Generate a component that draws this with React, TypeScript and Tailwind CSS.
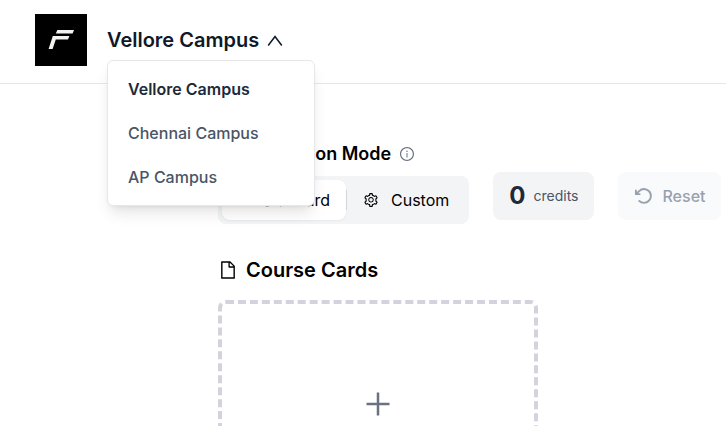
import { AiOutlineInfoCircle, AiOutlineSetting, AiOutlineFile } from "react-icons/ai";
import { PiArrowCounterClockwiseBold } from "react-icons/pi";

const campuses = ["Vellore Campus", "Chennai Campus", "AP Campus"];

function Logo() {
  return (
    <a href="#" aria-label="Home" className="block size-13 shrink-0 bg-black">
      <svg viewBox="0 0 52 52" className="size-full" fill="#f3f4f1">
        <path d="M22.4 16H39L37.6 19.6H20.8Z" />
        <path d="M17.8 22H34.4L33 25.4H20.8L17.6 35H13.6Z" />
      </svg>
    </a>
  );
}

function CampusPicker() {
  return (
    <div className="relative">
      <button type="button" aria-expanded="true" className="flex items-center gap-2 text-xl leading-7 font-semibold text-gray-900">
        Vellore Campus
        <svg viewBox="0 0 16 16" className="size-4" fill="none" stroke="currentColor" strokeWidth="1.5">
          <path d="M1.2 13.5L8 4.5L14.8 13.5" />
        </svg>
      </button>
      <ul className="absolute top-full left-0 z-10 mt-1.5 w-52 rounded-md border border-gray-200 bg-white py-1.5 shadow-lg">
        {campuses.map((name, i) => (
          <li key={name}>
            <button
              type="button"
              className={
                i === 0
                  ? "block h-11 w-full px-5 text-left text-base font-semibold text-gray-800"
                  : "block h-11 w-full px-5 text-left text-base font-medium text-gray-600"
              }
            >
              {name}
            </button>
          </li>
        ))}
      </ul>
    </div>
  );
}

export default function App() {
  return (
    <div className="h-screen overflow-hidden bg-white font-['Inter',sans-serif] text-black">
      <header className="flex items-center gap-5 border-b border-gray-200 px-[35px] pt-3.5 pb-[17px]">
        <Logo />
        <CampusPicker />
      </header>
      <main className="pt-14 pl-[218px]">
        <div className="flex items-end gap-6">
          <section>
            <h2 className="flex items-center gap-2 text-lg leading-7 font-semibold">
              <AiOutlineSetting className="mr-1.5 size-6" />
              Selection Mode
              <AiOutlineInfoCircle className="size-4 text-gray-500" />
            </h2>
            <div className="mt-2 flex items-center rounded-lg bg-gray-100 p-1">
              <button type="button" className="flex h-10 w-31 items-center justify-end gap-3 rounded-lg bg-white px-4 shadow-xs">
                <AiOutlineFile className="size-4" />
                Standard
              </button>
              <span className="h-5 w-px bg-gray-300" />
              <button type="button" className="flex h-10 items-center gap-3 px-4">
                <AiOutlineSetting className="size-4" />
                Custom
              </button>
            </div>
          </section>
          <div className="mb-1 flex h-12 items-center gap-2 rounded-lg bg-gray-100 px-4">
            <span className="text-2xl font-bold text-gray-800">0</span>
            <span className="text-sm text-gray-600">credits</span>
          </div>
          <button type="button" disabled className="mb-1 flex h-12 shrink-0 items-center gap-2 rounded-lg bg-gray-50 px-4 font-medium text-gray-400">
            <PiArrowCounterClockwiseBold className="size-5" />
            Reset
          </button>
        </div>
        <section className="mt-8">
          <h2 className="flex items-center gap-2 text-xl leading-7 font-semibold">
            <AiOutlineFile className="size-5" />
            Course Cards
          </h2>
          <button type="button" aria-label="Add course" className="mt-4 flex h-52 w-80 items-center justify-center rounded-lg border-4 border-dashed border-[#d2d3dc] text-gray-500">
            <svg viewBox="0 0 24 24" className="size-6" stroke="currentColor" strokeWidth="2.5">
              <path d="M12 .5V23.5M.5 12H23.5" />
            </svg>
          </button>
        </section>
      </main>
    </div>
  );
}
